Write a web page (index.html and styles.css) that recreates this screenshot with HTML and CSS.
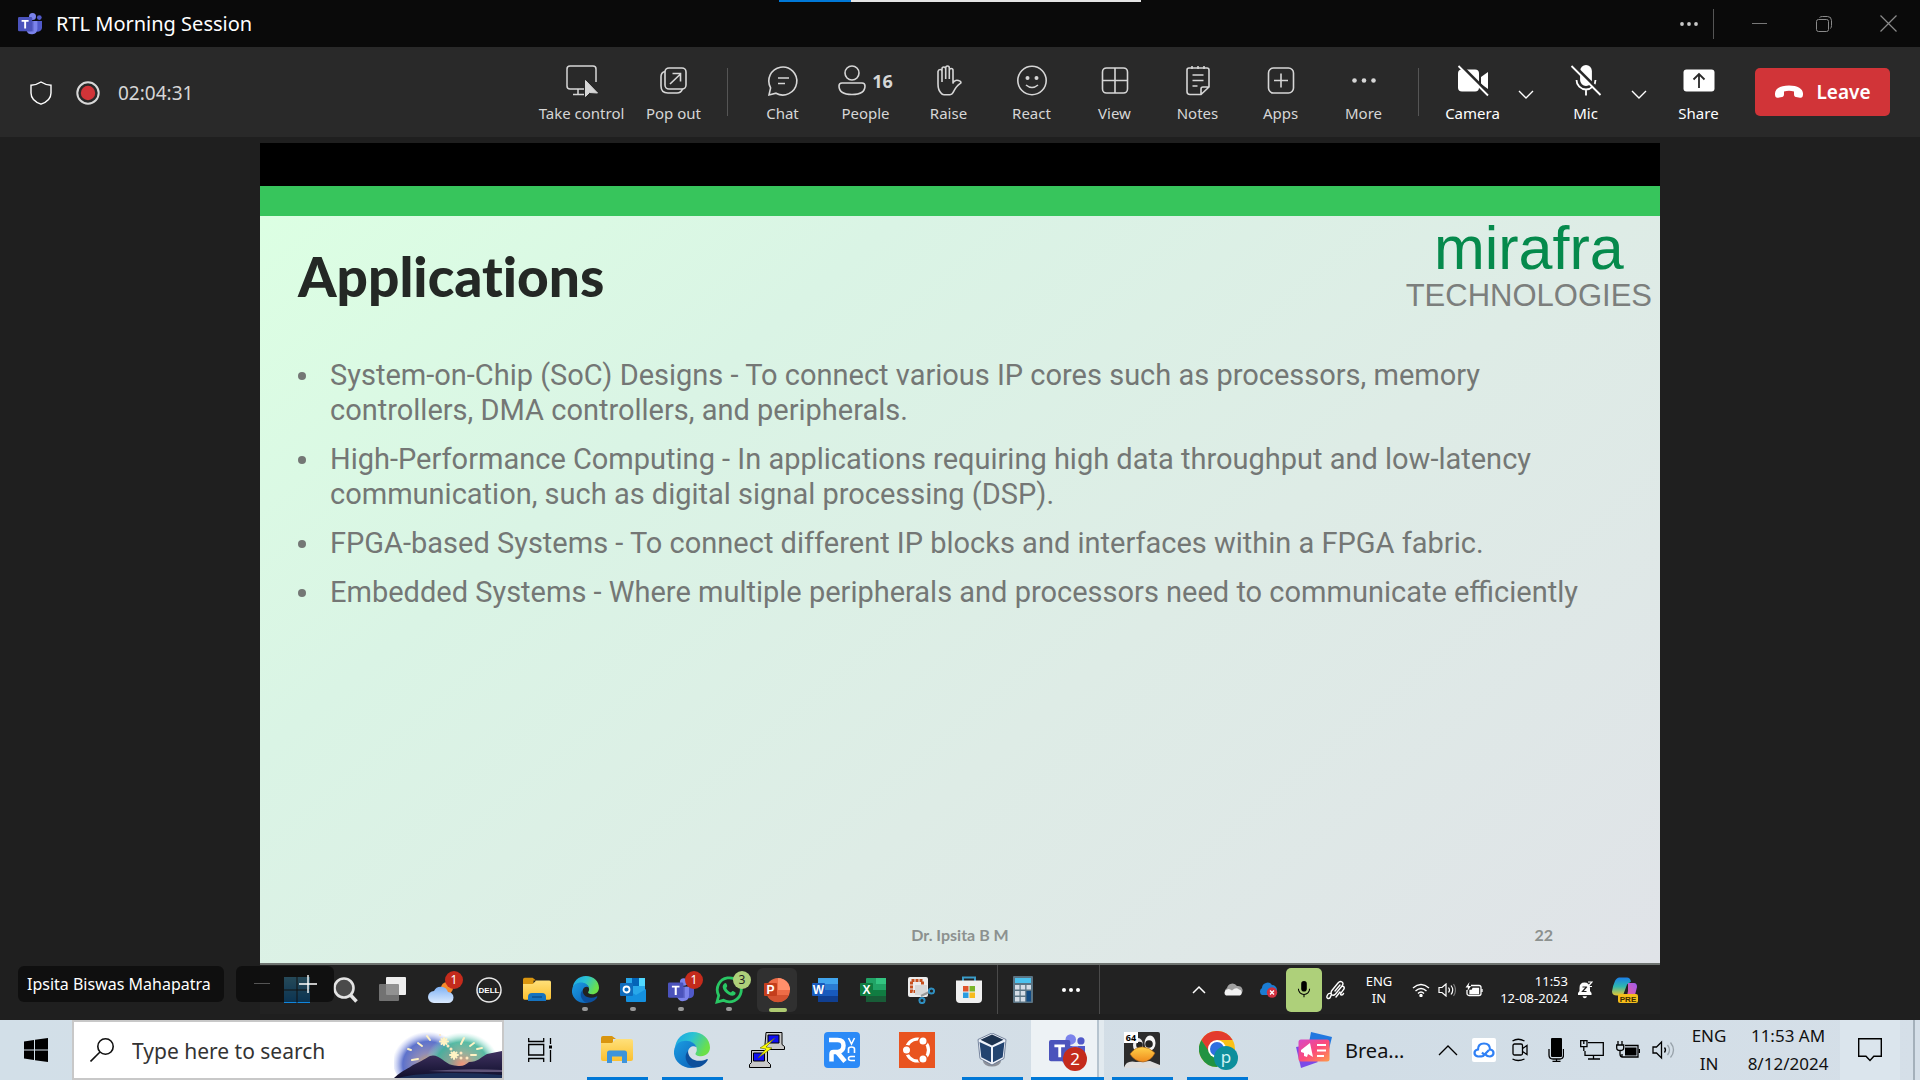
FILE: index.html
```html
<!DOCTYPE html>
<html lang="en">
<head>
<meta charset="utf-8">
<title>RTL Morning Session</title>
<meta name="viewport" content="width=device-width, initial-scale=1">
<link rel="stylesheet" href="styles.css">
</head>
<body>
<svg class="defs" aria-hidden="true">
  <defs>
    <linearGradient id="folder" x1="0" y1="0" x2="0" y2="1"><stop offset="0" stop-color="#ffe07a"/><stop offset="1" stop-color="#fbc02f"/></linearGradient>
    <linearGradient id="edgeTop" x1="0" y1="0" x2="1" y2="0.4"><stop offset="0" stop-color="#1ba3e8"/><stop offset="0.5" stop-color="#2bc3d2"/><stop offset="1" stop-color="#6be04a"/></linearGradient>
    <linearGradient id="edgeLow" x1="0" y1="0" x2="1" y2="1"><stop offset="0" stop-color="#1b9de2"/><stop offset="1" stop-color="#0b5cb5"/></linearGradient>
    <linearGradient id="news" x1="0" y1="0" x2="1" y2="1"><stop offset="0" stop-color="#d648c8"/><stop offset="0.5" stop-color="#fb4a7c"/><stop offset="1" stop-color="#ff9a4a"/></linearGradient>
    <linearGradient id="cloud" x1="0" y1="0" x2="0" y2="1"><stop offset="0" stop-color="#7fb2f5"/><stop offset="1" stop-color="#dbeafe"/></linearGradient>
    <linearGradient id="copA" x1="0" y1="0" x2="0" y2="1"><stop offset="0" stop-color="#1b7fe8"/><stop offset="0.5" stop-color="#2fb7b0"/><stop offset="1" stop-color="#e8c930"/></linearGradient>
    <linearGradient id="copB" x1="1" y1="0" x2="0" y2="1"><stop offset="0" stop-color="#9a5cf0"/><stop offset="1" stop-color="#ff5c8a"/></linearGradient>
    <linearGradient id="winTile" x1="0" y1="0" x2="0" y2="1"><stop offset="0" stop-color="#5fc4ef"/><stop offset="1" stop-color="#0f84dc"/></linearGradient>
    <linearGradient id="beak" x1="0" y1="0" x2="0" y2="1"><stop offset="0" stop-color="#ffd24a"/><stop offset="1" stop-color="#f08a1c"/></linearGradient>
    <radialGradient id="glowBlue" cy="0.6"><stop offset="0" stop-color="#d9a860"/><stop offset="0.35" stop-color="#8f8cb8"/><stop offset="0.7" stop-color="#5d72cc"/><stop offset="1" stop-color="#a0aef0" stop-opacity="0"/></radialGradient>
    <radialGradient id="glowGreen" cy="0.6"><stop offset="0" stop-color="#f08a6c"/><stop offset="0.35" stop-color="#8aa890"/><stop offset="0.7" stop-color="#45b49a"/><stop offset="1" stop-color="#9be6d6" stop-opacity="0"/></radialGradient>
    <linearGradient id="hill" x1="0" y1="0" x2="0" y2="1"><stop offset="0" stop-color="#3f3260"/><stop offset="1" stop-color="#100f2c"/></linearGradient>
    <symbol id="i-teams" viewBox="0 0 24 22">
      <circle cx="14.5" cy="3.6" r="3.5" fill="#7b83eb"/><circle cx="21.3" cy="4.6" r="2.4" fill="#5059c9"/>
      <path d="M16 8h8v6.5a4.3 4.3 0 0 1-8 2z" fill="#5059c9"/><path d="M8.500 8H19.400v8a5.600 5.600 0 0 1-10.900 1.500z" fill="#7b83eb"/>
      <path d="M8.500 8h7v10.400H9a8 8 0 0 1-.5-2z" fill="#4a50b0" opacity=".6"/>
      <rect y="4" width="14.200" height="14.200" rx="1.300" fill="#4b53bc"/><path d="M3.600 7h7v1.800H8.100v6.700H6.200V8.800H3.600z" fill="#fff"/>
    </symbol>
    <symbol id="i-edge" viewBox="0 0 36 36">
      <path d="M1 17C1 7 9 0 18.500 0 29 0 36 7.500 36 15.500c0 5-4 8.700-9 8.700-4 0-5.800-1.500-5.500-2.700.4-1.200 1.300-1.500 1.300-4C22.800 13 18 9.500 12 9.500 6 9.500 1.500 13 1 17z" fill="url(#edgeTop)"/>
      <path d="M0 19C1 11.500 6.500 8.800 12 8.800c5.500 0 9.500 3 10.500 6.400-3-2-8-.5-8.500 5C13.500 28 21 32.500 28 31c-3 3-7 5-11 5C7 36-1 28 0 19z" fill="url(#edgeLow)"/>
      <path d="M14 19c-4 4-3 11 3 15.500 4 1.500 8 1 11-.8 2.500-1.400 4.500-3.500 5.600-5.500.5-1-.3-1.400-1-1C27 30 20 29 17 26c-2-2-3-4.300-3-7z" fill="#0c4f9c"/>
    </symbol>
    <symbol id="i-folder" viewBox="0 0 32 28">
      <path d="M0 2a2 2 0 0 1 2-2h9l4 3h-3v5H0z" fill="#d9950f"/><path d="M0 7h11l4-4h15a2 2 0 0 1 2 2v18a2 2 0 0 1-2 2H2a2 2 0 0 1-2-2z" fill="url(#folder)"/>
    </symbol>
    <symbol id="i-mic" viewBox="0 0 20 26"><rect x="6" y="1" width="8" height="15" rx="4"/><path d="M2 12a8 8 0 0 0 16 0M10 20v4" fill="none" stroke="currentColor" stroke-width="1.500"/></symbol>
  </defs>
</svg>

<header class="titlebar">
  <div class="share-strip"><span class="share-strip-blue"></span></div>
  <svg class="brand" width="24" height="22"><use href="#i-teams"/></svg>
  <h1 class="title">RTL Morning Session</h1>
  <div class="win-controls">
    <button class="win-more" aria-label="More options"><svg width="20" height="6" fill="#c8c8c8"><circle cx="3" cy="3" r="1.900"/><circle cx="10" cy="3" r="1.900"/><circle cx="17" cy="3" r="1.900"/></svg></button>
    <span class="win-sep"></span>
    <button class="win-btn" aria-label="Minimize"><svg width="16" height="16" stroke="#777"><path d="M0 7.500h15"/></svg></button>
    <button class="win-btn" aria-label="Restore"><svg width="16" height="16" fill="none" stroke="#8a8a8a"><rect x=".5" y="3.500" width="12" height="12" rx="2"/><path d="M3.500 1.500q1-1 3-1h5q4 0 4 4v5q0 2-1 3"/></svg></button>
    <button class="win-btn" aria-label="Close"><svg width="17" height="17" stroke="#8a8a8a" stroke-width="1.200"><path d="M.5.500l16 16M16.500.500l-16 16"/></svg></button>
  </div>
</header>

<section class="callbar" aria-label="Call controls">
  <div class="status">
    <svg width="22" height="24" fill="none" stroke="#fff" stroke-width="1.400"><path d="M11 1c3 2 6 3 10 3.200V12c0 5.500-4 9-10 11.200C5 21 1 17.500 1 12V4.200C5 4 8 3 11 1z"/></svg>
    <svg width="24" height="24"><circle cx="12" cy="12" r="10.700" fill="none" stroke="#d8d8d8" stroke-width="2"/><circle cx="12" cy="12" r="7.200" fill="#d13438"/></svg>
    <time class="elapsed">02:04:31</time>
  </div>
  <div class="tools">
    <button class="tool tool-wide"><svg width="34" height="34" fill="none" stroke="currentColor" stroke-width="1.500"><path d="M19 25H5a3 3 0 0 1-3-3V5a3 3 0 0 1 3-3h23a3 3 0 0 1 3 3v13M13 25v5M8 30.500h11"/><path d="M20.500 16.500v16l4-4 8 .5z" fill="currentColor" stroke-width="1"/></svg><span>Take control</span></button>
    <button class="tool"><svg width="34" height="34" fill="none" stroke="currentColor" stroke-width="1.600"><rect x="8" y="4" width="21" height="21" rx="4"/><path d="M8 7.500q-4 1-4 5V22q0 7 7 7h9q4 0 5.500-4M13 20L23.500 10M15.500 9.500h8v8"/></svg><span>Pop out</span></button>
    <span class="tool-sep"></span>
    <button class="tool"><svg width="34" height="34" fill="none" stroke="currentColor" stroke-width="1.600"><path d="M3 31l1.600-7.200A14 14 0 1 1 10 29.200z"/><path d="M12 14h11M12 19.500h7"/></svg><span>Chat</span></button>
    <button class="tool"><span class="tool-count"><svg width="28" height="34" fill="none" stroke="currentColor" stroke-width="1.600"><circle cx="14" cy="9" r="7"/><path d="M4 19h20q3 0 3 3 0 8.500-13 8.500T1 22q0-3 3-3z"/></svg><b>16</b></span><span>People</span></button>
    <button class="tool"><svg width="34" height="34" fill="none" stroke="currentColor" stroke-width="1.600" stroke-linejoin="round"><path d="M10 18V7.500q0-2-1.800-2T6 7.500V20q0 6 3 9 1 1.700 3 1.700h6q2 0 3-2c2-4 4-7 7-9 1.500-1 1-2 0-2.600-3-1.500-6-1-7 2V6.500q0-2-1.800-2t-1.900 2V15M10 14V5q0-2 1.800-2T13.700 5v10M13.700 14V4q0-2 1.800-2t1.800 2v11"/></svg><span>Raise</span></button>
    <button class="tool"><svg width="34" height="34" fill="none" stroke="currentColor" stroke-width="1.600"><circle cx="17" cy="16.500" r="14.200"/><path d="M11 21q6 5 12 0"/><g fill="currentColor" stroke="none"><circle cx="12.500" cy="14" r="2"/><circle cx="21.500" cy="14" r="2"/></g></svg><span>React</span></button>
    <button class="tool"><svg width="34" height="34" fill="none" stroke="currentColor" stroke-width="1.600"><rect x="4.500" y="4" width="25" height="25" rx="4"/><path d="M17 4v25M4.500 16.500h25"/></svg><span>View</span></button>
    <button class="tool"><svg width="34" height="34" fill="none" stroke="currentColor" stroke-width="1.600"><path d="M20 30.500H9a3 3 0 0 1-3-3V6a2 2 0 0 1 2-2h18a2 2 0 0 1 2 2v17zM20 30.500V25q0-2 2-2h6M11 2v3M17 2v3M23 2v3M11.500 11h11M11.500 16.500h11M11.500 22h5"/></svg><span>Notes</span></button>
    <button class="tool"><svg width="34" height="34" fill="none" stroke="currentColor" stroke-width="1.600"><rect x="4.500" y="4" width="25" height="25" rx="5"/><path d="M17 9.500v14M10 16.500h14"/></svg><span>Apps</span></button>
    <button class="tool"><svg width="34" height="34" fill="currentColor"><circle cx="7.500" cy="16.500" r="2.300"/><circle cx="17" cy="16.500" r="2.300"/><circle cx="26.500" cy="16.500" r="2.300"/></svg><span>More</span></button>
    <span class="tool-sep tool-sep-right"></span>
    <div class="split">
      <button class="tool"><svg width="34" height="34"><rect x="2" y="5.500" width="21" height="22" rx="4" fill="#fff"/><path d="M25 13l7-5v17l-7-5z" fill="#fff"/><path d="M4 .500L34 30.500" stroke="#292929" stroke-width="3"/><path d="M2.500 2L32 31.500" stroke="#fff" stroke-width="1.800"/></svg><span>Camera</span></button>
      <button class="chev" aria-label="Camera options"><svg width="16" height="10" fill="none" stroke="#fff" stroke-width="1.400"><path d="M1 1l7 7 7-7"/></svg></button>
    </div>
    <div class="split">
      <button class="tool"><svg width="34" height="34" fill="none" stroke="#fff" stroke-width="1.800"><rect x="12" y="2" width="10" height="19" rx="5" fill="#fff"/><path d="M7.500 16a9.500 9.500 0 0 0 19 0M17 26v5.500"/><path d="M4 .500L34 30.500" stroke="#292929" stroke-width="3"/><path d="M2.500 2L31.500 31"/></svg><span>Mic</span></button>
      <button class="chev" aria-label="Microphone options"><svg width="16" height="10" fill="none" stroke="#fff" stroke-width="1.400"><path d="M1 1l7 7 7-7"/></svg></button>
    </div>
    <button class="tool tool-share"><svg width="34" height="34"><rect x="1.500" y="5.500" width="31" height="22" rx="3" fill="#fff"/><path d="M17 24V10M11.500 15.500L17 10l5.500 5.500" fill="none" stroke="#292929" stroke-width="1.800"/></svg><span>Share</span></button>
    <button class="leave"><svg width="30" height="14" fill="#fff"><path d="M15 .500c9 0 14.500 3.500 14 9-.2 2.500-1 3.600-3 3.200l-4-.8c-1.500-.4-2-1-2-3V6.500q-5-1.500-10 0V9c0 2-.5 2.600-2 3l-4 .8c-2 .3-2.800-.8-3-3.200C.5 4 6 .500 15 .500z"/></svg>Leave</button>
  </div>
</section>

<main class="stage">
  <div class="shared">
    <div class="shared-gap"></div>
    <article class="slide">
      <div class="slide-head">
        <h2>Applications</h2>
        <div class="logo"><span class="logo-name">mirafra</span><span class="logo-sub">TECHNOLOGIES</span></div>
      </div>
      <ul>
        <li>System-on-Chip (SoC) Designs - To connect various IP cores such as processors, memory controllers, DMA controllers, and peripherals.</li>
        <li>High-Performance Computing - In applications requiring high data throughput and low-latency communication, such as digital signal processing (DSP).</li>
        <li>FPGA-based Systems - To connect different IP blocks and interfaces within a FPGA fabric.</li>
        <li>Embedded Systems - Where multiple peripherals and processors need to communicate efficiently</li>
      </ul>
      <footer class="slide-foot"><span></span><span>Dr. Ipsita B M</span><span class="slide-num">22</span></footer>
    </article>
    <div class="remote-bar">
      <div class="remote-apps">
        <div class="r-app"><svg width="26" height="26" fill="url(#winTile)"><path d="M0 0h12.500v12.500H0zM13.500 0H26v12.500H13.500zM0 13.500h12.500V26H0zM13.500 13.500H26V26H13.500z"/></svg></div>
        <div class="r-app"><svg width="26" height="26" fill="#4a4a4a" stroke="#e4e4e4" stroke-width="2.600"><circle cx="12" cy="11" r="9.500"/><path d="M18.500 18l6 6.500" stroke-width="3.500"/></svg></div>
        <div class="r-app"><svg width="28" height="26"><rect x="7" width="20" height="18" rx="1" fill="#eee"/><rect y="7" width="20" height="17" rx="1" fill="#808080" opacity=".85"/></svg></div>
        <div class="r-app"><svg width="28" height="28"><circle cx="20" cy="12" r="6" fill="#f58a2c"/><path d="M7 27a6 6 0 0 1 0-12 7.500 7.500 0 0 1 14 1 5.500 5.500 0 0 1 0 11z" fill="url(#cloud)"/></svg><i class="badge">1</i></div>
        <div class="r-app"><svg width="26" height="26"><circle cx="13" cy="13" r="12" fill="none" stroke="#e8e8e8" stroke-width="1.500"/><text x="13" y="16" text-anchor="middle" class="dell">DELL</text></svg></div>
        <div class="r-app"><svg width="28" height="26"><use href="#i-folder"/><path d="M5 24v-4q0-4 4-4h10q4 0 4 4v4z" fill="#1573c0"/><path d="M9 20h10" stroke="#0c4f8e" stroke-width="1.500"/></svg></div>
        <div class="r-app r-run"><svg width="27" height="27"><use href="#i-edge"/></svg></div>
        <div class="r-app r-run"><svg width="26" height="26"><rect x="6" y="1" width="19" height="18" fill="#28a8ea"/><path d="M12 1h7v8h-7z" fill="#0364b8"/><path d="M19 1h6v8h-6z" fill="#50d9ff"/><path d="M6 12l10 6 10-6v12a1 1 0 0 1-1 1H7a1 1 0 0 1-1-1z" fill="#1490df"/><rect y="6" width="13" height="13" rx="1" fill="#0f6cbd"/><circle cx="6.500" cy="12.500" r="3" fill="none" stroke="#fff" stroke-width="1.800"/></svg></div>
        <div class="r-app r-run"><svg width="26" height="24"><use href="#i-teams"/></svg><i class="badge">1</i></div>
        <div class="r-app r-run"><svg width="28" height="28"><path d="M2 26l1.700-6.500A12 12 0 1 1 8.400 24.300z" fill="none" stroke="#29c764" stroke-width="2.800"/><path d="M9.500 7.500c1-1 2 0 2.500 1.500s0 2-.8 3c1 2 2.500 3.500 4.800 4.500 1-1 1.500-1.800 2.500-1.200 2 1 2.500 1.200 2 2.500-1 2.500-4 2.500-7 .8s-5.500-4.600-5.800-7.300c0-1.800.6-2.800 1.800-3.800z" fill="#29c764"/></svg><i class="badge badge-lime">3</i></div>
        <div class="r-app r-run r-active"><svg width="26" height="26"><circle cx="14" cy="13" r="12" fill="#ed6c47"/><path d="M14 1a12 12 0 0 1 12 12H14z" fill="#ff8f6b"/><path d="M3 18a12 12 0 0 0 22 0z" fill="#d35230"/><rect y="6" width="13" height="13" rx="1" fill="#c43e1c"/><text x="6.500" y="17" text-anchor="middle" class="glyph">P</text></svg></div>
        <div class="r-app"><svg width="26" height="26"><rect x="6" y="1" width="20" height="24" rx="1" fill="#2b7cd3"/><path d="M6 1h20v6H6z" fill="#41a5ee"/><path d="M6 13h20v6H6z" fill="#185abd"/><path d="M6 19h20v6H6z" fill="#103f91"/><rect y="6" width="13" height="13" rx="1" fill="#185abd"/><text x="6.500" y="17" text-anchor="middle" class="glyph">W</text></svg></div>
        <div class="r-app"><svg width="26" height="26"><rect x="6" y="1" width="20" height="24" rx="1" fill="#21a366"/><path d="M16 1h10v6H16z" fill="#33c481"/><path d="M6 13h20v12H6z" fill="#107c41"/><path d="M6 19h20v6H6z" fill="#185c37"/><rect y="6" width="13" height="13" rx="1" fill="#107c41"/><text x="6.500" y="17" text-anchor="middle" class="glyph">X</text></svg></div>
        <div class="r-app"><svg width="28" height="28"><rect x="1" y="1" width="20" height="20" rx="2" fill="#ececec"/><rect x="4.500" y="4.500" width="11" height="11" fill="none" stroke="#c8501e" stroke-width="3" stroke-dasharray="3 1"/><path d="M8 9h12v10H8z" fill="#d8d8d8"/><path d="M14 20l8-4" stroke="#999" stroke-width="2"/><circle cx="24.500" cy="15" r="2.600" fill="none" stroke="#2f8fc0" stroke-width="2"/><circle cx="15" cy="24.500" r="2.600" fill="none" stroke="#2f8fc0" stroke-width="2"/></svg></div>
        <div class="r-app"><svg width="26" height="27"><path d="M7 6V1.500h12V6" fill="none" stroke="#3a9cc8" stroke-width="2"/><path d="M0 4.500h26V23a4 4 0 0 1-4 4H4a4 4 0 0 1-4-4z" fill="#f0f0f0"/><path d="M7 10h5.500v5.500H7z" fill="#e0542c"/><path d="M13.500 10H19v5.500h-5.500z" fill="#7ab52a"/><path d="M7 16.500h5.500V22H7z" fill="#2c9ce0"/><path d="M13.500 16.500H19V22h-5.500z" fill="#f7bb1e"/></svg></div>
        <span class="r-sep"></span>
        <div class="r-app"><svg width="20" height="27"><rect width="20" height="27" rx="1" fill="#5b7484"/><path d="M2 2h16v5H2z" fill="#4cc2ee"/><path d="M2 9h4.500v4.500H2zM7.700 9h4.500v4.500H7.700zM13.500 9H18v4.500h-4.500zM2 15h4.500v4.500H2zM7.700 15h4.500v4.500H7.700zM2 21h4.500v4.500H2zM7.700 21h4.500v4.500H7.700z" fill="#d5dde6"/><path d="M13.500 15H18v10.500h-4.500z" fill="#114a82"/></svg></div>
        <div class="r-app"><svg width="20" height="6" fill="#fff"><circle cx="3" cy="3" r="2"/><circle cx="10" cy="3" r="2"/><circle cx="17" cy="3" r="2"/></svg></div>
        <span class="r-sep"></span>
      </div>
      <div class="remote-tray">
        <div class="rt w34"><svg width="14" height="9" fill="none" stroke="#fff" stroke-width="1.500"><path d="M1 8l6-6 6 6"/></svg></div>
        <div class="rt w34"><svg width="20" height="13"><path d="M4 12a4 4 0 0 1 0-7 5.500 5.500 0 0 1 10-2 4 4 0 0 1 2 9z" fill="#a0a0a0"/><path d="M3 12.500a3.300 3.300 0 0 1 1-6q2-1.500 5 1 4-4 7-1a3.200 3.200 0 0 1 1 6z" fill="#f2f2f2"/></svg></div>
        <div class="rt w36"><svg width="20" height="16"><path d="M4 13a4 4 0 0 1 0-7 5.500 5.500 0 0 1 10-3 4.500 4.500 0 0 1 0 10z" fill="#1b7cd2"/><circle cx="14" cy="10.500" r="5.200" fill="#d23240"/><path d="M12 8.500l4 4M16 8.500l-4 4" stroke="#fff" stroke-width="1.300"/></svg></div>
        <div class="rt rt-mic"><svg width="14" height="19"><use href="#i-mic"/></svg></div>
        <div class="rt w28"><svg width="20" height="20" fill="none" stroke="#fff" stroke-width="1.400" stroke-linecap="round"><path d="M5.500 11L12 3q2-2.500 4-1t0 4L9.500 14q-2 2-3.500 1t-.5-4zM9 11l5-6M16 6q3 .5 2 3l-3 4q-1 2 .5 2t2-1.500M5 15.500q-1 3.500-3 3T1.500 15q1-2 3-1.500M10 17l4-5"/></svg></div>
        <div class="rt rt-lang">ENG<br>IN</div>
        <div class="rt w26"><svg width="18" height="14" fill="none" stroke="#fff" stroke-width="1.400"><path d="M1 5q8-7 16 0M3.500 8q5.500-5 11 0M6 10.500q3-3 6 0"/><circle cx="9" cy="12.500" r="1" fill="#fff"/></svg></div>
        <div class="rt w26"><svg width="18" height="14" fill="none" stroke="#fff" stroke-width="1.200"><path d="M1 4.500h3l4-3.500v12l-4-3.500H1z"/><path d="M10.500 4.500q2 2.500 0 5M13 2.500q3.500 4.500 0 9"/><path d="M15.500 1q4 6 0 12" stroke="#777"/></svg></div>
        <div class="rt w28"><svg width="18" height="15" fill="none" stroke="#fff" stroke-width="1.300"><path d="M6 3.500h8a2 2 0 0 1 2 2v6a2 2 0 0 1-2 2H4a2 2 0 0 1-2-2V8"/><path d="M7 11.500h6.500v-5H8l-1 2H5v3zM17 7v3" fill="#fff"/><path d="M4.500 0L.500 5.500H3l-.5 3.500L6 4H3.500z" fill="#fff" stroke="none"/></svg></div>
        <div class="rt rt-time">11:53<br>12-08-2024</div>
        <div class="rt w34"><svg width="16" height="18"><path d="M1 14V12l1.500-2V7q0-5.500 5-5.500T13 7v3l1.500 2v2zM5.500 15.200h4.500q-.5 2-2.200 2t-2.300-2z" fill="#fff"/><path d="M5.500 6h4l-4 4.500h4" fill="none" stroke="#222" stroke-width="1.200"/><path d="M11 1h4l-4 4.500h4" fill="none" stroke="#fff" stroke-width="1.200"/></svg></div>
        <div class="rt rt-copilot"><svg width="26" height="26"><path d="M8 .500h7q3 0 4 4l-4 3-4 11H5q-5 0-5-4Q1 8 3 4T8 .500z" fill="url(#copA)"/><path d="M16 6h6q3 0 3 4l-2 8q-1 4-5 4h-6q3-1 4-8z" fill="url(#copB)"/><rect x="6" y="17" width="20" height="9" rx="2" fill="#f5bd1a"/><text x="16" y="25" text-anchor="middle" class="pre">PRE</text></svg></div>
      </div>
    </div>
  </div>
  <div class="name-tag">Ipsita Biswas Mahapatra</div>
  <div class="zoom-box">
    <button aria-label="Zoom out"><svg width="18" height="18" stroke="#555"><path d="M1 8.500h16"/></svg></button>
    <button aria-label="Zoom in"><svg width="18" height="18" stroke="#fff" stroke-width="1.400"><path d="M0 9h18M9 0v18"/></svg></button>
  </div>
</main>

<footer class="taskbar">
  <button class="start" aria-label="Start"><svg width="24" height="24"><path d="M0 3.400l10-1.400v9.500H0zM11 1.800L24 0v11.500H11zM0 12.500h10V22L0 20.600zM11 12.500h13V24l-13-1.800z"/></svg></button>
  <label class="search">
    <svg width="24" height="24" fill="none" stroke="#111" stroke-width="1.600"><circle cx="15.500" cy="8.500" r="7.700"/><path d="M10 14L.500 23.500"/></svg>
    <input type="text" placeholder="Type here to search" aria-label="Type here to search">
    <svg class="highlight" width="108" height="54" viewBox="0 0 108 54">
      <ellipse cx="34" cy="34" rx="36" ry="33" fill="url(#glowBlue)"/><ellipse cx="68" cy="34" rx="37" ry="32" fill="url(#glowGreen)" opacity=".9"/>
      <path d="M0 54c10-9 14-9 19-13 9-4 13-7 17-9 8-3 14 7 22 9 10 2 12 1 17-3 9 0 12-5 18-8l15-3v27z" fill="url(#hill)"/>
      <path d="M4 54c20-6 70-6 104-3v3z" fill="#1c2f58"/><path d="M34 47q40-3 74-1v2q-40 0-74-1z" fill="#5f5478"/>
      <g stroke="#fff3c4" stroke-width="2" stroke-linecap="round"><path d="M33 12l3 4M24 19l4 3M14 25l3 1M18 36l6-1M70 14l-3 6M80 19l-4 3M88 24l-5 1M82 31h-5M50 14v7M46 17.500h8M47.500 15l5 5M52.500 15l-5 5M60 28v7M56 31h8M57.500 28.500l5 5M62.500 28.500l-5 5"/></g>
      <g fill="#ffe9c0"><circle cx="54" cy="22" r="1.500"/><circle cx="57" cy="25" r="1.500"/><circle cx="67" cy="29" r="1.500"/><circle cx="67" cy="34" r="1.500"/><circle cx="73" cy="34" r="1.500"/><circle cx="46" cy="11" r="1"/></g>
    </svg>
  </label>
  <button class="taskview" aria-label="Task View"><svg width="24" height="24" fill="none" stroke="#000" stroke-width="1.300"><path d="M.700 0v3.500h15V0M.700 6.500h15v10.500H.700zM.700 24v-3.500h15V24M22.500 0v6M22.500 12v12"/><path d="M21 7.500h3v3h-3z" fill="#000" stroke="none"/></svg></button>
  <nav class="apps" aria-label="Open apps">
    <button class="app open" aria-label="File Explorer"><svg width="32" height="28"><use href="#i-folder"/><path d="M6 27V17q0-2.500 2.500-2.500h15Q26 14.500 26 17v10h-5v-6.500H11V27z" fill="#3d94dc"/></svg></button>
    <button class="app open" aria-label="Edge"><svg width="36" height="36"><use href="#i-edge"/></svg></button>
    <button class="app" aria-label="PuTTY"><svg width="36" height="36"><g stroke="#000"><path d="M17 .500h16v12l2.500 2v3H18l-2-5z" fill="#c9c9c9"/><path d="M19 3h11v8H19z" fill="#1010f0"/><path d="M2.500 18.500h16v11l3 3v3H.500v-3l2-2z" fill="#c9c9c9"/><path d="M4.500 21h11v8h-11z" fill="#1010f0"/></g><path d="M26 6L11 16l6 1-8 9 14-10-6-1z" fill="#ff0" stroke="#660" stroke-width=".6"/></svg></button>
    <button class="app" aria-label="RealVNC"><svg width="36" height="36" fill="none" stroke="#fff"><rect width="36" height="36" rx="4" fill="#2b8af7" stroke="none"/><path d="M5 8h8.500q6 0 6 5.500T14 20H9.500q-2 0-2 2v7.500M13 20l8 9.500" stroke-width="4.500"/><path d="M24.500 6l3 6 3-6M24.500 21v-4q0-2 3-2t3 2v4M31 24.500h-4q-2.500 0-2.500 2t2.500 2h4" stroke-width="1.600"/></svg></button>
    <button class="app" aria-label="Ubuntu"><svg width="36" height="36"><rect width="36" height="36" fill="#e95420"/><circle cx="18.500" cy="18" r="11" fill="none" stroke="#fff" stroke-width="3.200"/><g fill="#fff" stroke="#e95420" stroke-width="1.600"><circle cx="7.500" cy="18" r="4.300"/><circle cx="24" cy="9" r="4.300"/><circle cx="24" cy="27" r="4.300"/></g></svg></button>
    <button class="app open" aria-label="VirtualBox"><svg width="30" height="34"><ellipse cx="15" cy="28" rx="9" ry="5.500" fill="#8c9099"/><path d="M15 0l14 6.500-2 19L15 32 3 25.500 1 6.500z" fill="#eef2fa" stroke="#5a6b88" stroke-width=".8"/><path d="M15 1.500l11.500 5.200L15 12.500 3.500 6.700z" fill="#1d3350"/><path d="M2.500 9l11.500 5.300v15L4.300 24.200zM27.500 9L16 14.300v15l9.700-5.100z" fill="#234470"/></svg></button>
    <button class="app open app-active" aria-label="Teams"><svg width="36" height="33"><use href="#i-teams"/></svg><i class="count">2</i></button>
    <button class="app open" aria-label="MobaXterm"><svg width="36" height="36"><rect width="36" height="36" rx="2" fill="#2c2c2c"/><path d="M0 36q2-8 12-6l14-1 10 4v3z" fill="#ddd"/><ellipse cx="14" cy="13" rx="5" ry="7" fill="#eee"/><ellipse cx="26" cy="11" rx="5.500" ry="7.500" fill="#f5f5f5"/><circle cx="15.500" cy="13" r="3.300" fill="#222"/><circle cx="25" cy="12" r="3.800" fill="#222"/><path d="M6 22q6-8 13-7 6 0 12 6-4 8-12 9-9-1-13-8z" fill="url(#beak)" stroke="#a55c10" stroke-width=".6"/><rect width="14" height="11" fill="#fff"/><text x="7" y="9" text-anchor="middle" class="n64">64</text></svg></button>
    <button class="app open" aria-label="Chrome"><svg class="chrome" width="40" height="40"><circle cx="18" cy="18" r="18" fill="#fbc116"/><path d="M2.400 9A18 18 0 0 1 33.600 9H18L10 22z" fill="#e33b2e"/><path d="M2.400 9A18 18 0 0 0 18 36l8-13-15-1z" fill="#229342"/><circle cx="18" cy="18" r="9" fill="#fff"/><circle cx="18" cy="18" r="7" fill="#2f6fe0"/><circle cx="27" cy="27" r="12" fill="#0d8f9c"/><text x="27" y="32" text-anchor="middle" class="p-badge">p</text></svg></button>
  </nav>
  <div class="tray">
    <a class="news" href="#"><svg width="36" height="36"><path d="M15 0l21 5-4 16-20-5z" fill="#2178e0"/><path d="M0 15l6-1 16 16-17 6z" fill="#7b4ae8"/><rect x="2.500" y="7.500" width="31" height="22" rx="2.500" fill="url(#news)"/><path d="M5 18l9-7 3 14-5-3-1 3-3-1v-3l-3-1z" fill="#fff"/><path d="M21 13h9M21 18.500h9M21 24h7" stroke="#fff" stroke-width="1.800"/></svg><span>Brea...</span></a>
    <div class="ti w36"><svg width="20" height="12" fill="none" stroke="#000" stroke-width="1.300"><path d="M1 11l9-9 9 9"/></svg></div>
    <div class="ti w36"><svg width="24" height="24"><rect width="24" height="24" rx="2" fill="#fff"/><path d="M13 17.500l-3-3M17 12l-6 6q-1 .5-5 .5-3.500-.5-3.500-3.500T6 11.500q0-6 6-6t6 6q3.500.5 3.500 3.500T18 18.500q-3 0-4.500-2" fill="none" stroke="#2f80f5" stroke-width="2.200"/></svg></div>
    <div class="ti w36"><svg width="20" height="24" fill="none" stroke="#000" stroke-width="1.300"><rect x="3" y="6" width="9.500" height="11" rx="1.500"/><path d="M12.500 10.500l4.500-3v9l-4.500-3M2.500 3q5.500-3.500 12 0M2.500 21q5.500 3 12 0"/></svg></div>
    <div class="ti w36"><svg width="16" height="24"><rect x="3" width="11" height="19" rx="1"/><path d="M1 11v6q0 4 4 4h7q3.500 0 3.500-4v-6M8.500 21v3M4.500 23.400h8" fill="none" stroke="#000" stroke-width="1.300"/></svg></div>
    <div class="ti w36"><svg width="24" height="20" fill="none" stroke="#000" stroke-width="1.300"><path d="M8 2.700h15.300v12.600H5V11M13.500 15.500V19M8 19h12M.700.700H7v6H.700zM3.800.700V4M3.800 7v4"/></svg></div>
    <div class="ti w36"><svg width="24" height="18" fill="none" stroke="#000" stroke-width="1.300"><path d="M9 4.500h13v11.500H6v-3M23.500 8v4M2 0v4M6 0v4M.700 4h7v3q0 2.500-3.500 2.500T.700 7zM4 9.500V13q0 3 2.500 3"/><path d="M9 6.500h11.500v8H9z" fill="#000" stroke="none"/></svg></div>
    <div class="ti w36"><svg width="24" height="20" fill="none" stroke="#000" stroke-width="1.300"><path d="M1 7h3.500L9.500 2v16l-5-5H1z"/><path d="M12.500 7.500q2 2.500 0 5"/><path d="M15.500 5q4 5 0 10M18.500 2.500q6 7.500 0 15" stroke="#98a2aa"/></svg></div>
    <div class="lang">ENG<br>IN</div>
    <div class="clock">11:53 AM<br>8/12/2024</div>
    <button class="notif" aria-label="Notifications"><svg width="24" height="24" fill="none" stroke="#000" stroke-width="1.400"><path d="M.700.700h22.600v17.500h-7.500L12 22.500l-4-4.300H.700z"/></svg></button>
    <button class="peek" aria-label="Show desktop"></button>
  </div>
</footer>
</body>
</html>
```
FILE: styles.css
```css
* { box-sizing: border-box; }
body {
  margin: 0;
  min-height: 100vh;
  display: flex;
  flex-direction: column;
  background: #1f1f1f;
  color: #fff;
  font-family: "Noto Sans", "Open Sans", sans-serif;
}
button {
  margin: 0;
  padding: 0;
  border: 0;
  background: none;
  color: inherit;
  font: inherit;
  display: flex;
  align-items: center;
  justify-content: center;
}
svg { display: block; flex: none; }
.defs { position: absolute; width: 0; height: 0; }

/* title bar */
.titlebar {
  position: relative;
  display: flex;
  align-items: center;
  height: 47px;
  padding-left: 18px;
  background: #0a0a0a;
}
.share-strip {
  position: absolute;
  top: 0;
  left: calc(50% - 181px);
  width: 362px;
  height: 2px;
  background: #e4e4e4;
}
.share-strip-blue { display: block; width: 72px; height: 2px; background: #0078d7; }
.title { margin: 0 0 0 14px; font-size: 20px; line-height: 28px; font-weight: 400; }
.win-controls { display: flex; align-items: center; margin-left: auto; }
.win-more { width: 48px; height: 47px; }
.win-sep { width: 1px; height: 30px; margin-right: 14px; background: #555; }
.win-btn { width: 64px; height: 46px; }

/* call controls */
.callbar {
  display: flex;
  justify-content: space-between;
  height: 90px;
  padding: 0 30px;
  background: #292929;
}
.status { display: flex; align-items: center; gap: 24px; padding-top: 2px; }
.elapsed { margin-left: -6px; font-size: 19px; line-height: 28px; color: #d6d6d6; }
.tools { display: flex; align-items: center; color: #d6d6d6; }
.tool {
  width: 83px;
  height: 90px;
  flex-direction: column;
  justify-content: flex-start;
  gap: 5px;
  padding-top: 17px;
  font-size: 15px;
  line-height: 20px;
}
.tool-wide { width: 101px; }
.tool-count { display: flex; align-items: center; gap: 6px; font-size: 18px; }
.tool-sep { width: 1px; height: 48px; margin-right: 13px; margin-left: 12px; background: #555; }
.tool-sep-right { margin-left: 13px; margin-right: 18px; }
.split { display: flex; margin-right: 6px; color: #fff; }
.split:nth-of-type(2) { margin-right: 0; }
.split .tool { width: 71px; }
.chev { width: 36px; height: 90px; padding-top: 5px; }
.tool-share { color: #fff; }
.leave {
  width: 135px;
  height: 48px;
  margin-left: 15px;
  gap: 12px;
  border-radius: 5px;
  background: #d13438;
  color: #fff;
  font-size: 19px;
  font-weight: 600;
}

/* shared screen */
.stage {
  position: relative;
  flex: 1;
  display: flex;
  padding: 6px 260px;
}
.shared { flex: 1; display: flex; flex-direction: column; background: #222; }
.shared-gap { height: 43px; background: #000; }
.slide {
  flex: 1;
  display: flex;
  flex-direction: column;
  border-top: 30px solid #37c55c;
  border-bottom: 2px solid #6f7471;
  background: linear-gradient(140deg, #dcffe3 0%, #daf4e5 28%, #deece6 60%, #e0e3e8 100%);
  font-family: Roboto, sans-serif;
}
.slide-head { display: flex; justify-content: space-between; padding: 0 8px 0 38px; }
.slide h2 {
  margin: 27px 0 0;
  color: #242825;
  font-family: Lato, sans-serif;
  font-size: 55px;
  line-height: 66px;
  font-weight: 900;
  font-variant-ligatures: none;
}
.logo { display: flex; flex-direction: column; align-items: center; font-family: "Liberation Sans", sans-serif; }
.logo-name { color: #058a4c; font-size: 61px; line-height: 64px; }
.logo-sub { color: #7c7f7d; font-size: 31px; line-height: 32px; }
.slide ul {
  display: flex;
  flex-direction: column;
  gap: 14px;
  margin: 46px 0 0;
  padding: 0 60px 0 70px;
  color: #747775;
  font-size: 29px;
  line-height: 35px;
  list-style: none;
}
.slide li::before {
  content: "";
  float: left;
  width: 8px;
  height: 8px;
  margin: 14px 0 0 -32px;
  border-radius: 4px;
  background: #747775;
}
.slide-foot {
  display: grid;
  grid-template-columns: 1fr 1fr 1fr;
  margin-top: auto;
  padding: 0 107px 18px;
  color: #8c918f;
  font-family: Lato, sans-serif;
  font-size: 16px;
  line-height: 20px;
  font-weight: 700;
  text-align: center;
}
.slide-num { text-align: right; }

.remote-bar { display: flex; justify-content: space-between; height: 49px; padding: 0 12px 0 13px; font-family: "Noto Sans", sans-serif; }
.remote-apps, .remote-tray { display: flex; align-items: center; }
.r-app { position: relative; width: 48px; height: 49px; display: grid; place-items: center; }
.r-run::after {
  content: "";
  position: absolute;
  bottom: 3px;
  left: 21px;
  width: 6px;
  height: 4px;
  border-radius: 2px;
  background: #999;
}
.r-active { height: 44px; border-radius: 6px; background: #303030; width: 40px; margin: 0 4px; }
.r-active::after { bottom: 0; left: 12px; width: 18px; background: #aecb72; }
.badge {
  position: absolute;
  top: 6px;
  right: 2px;
  width: 18px;
  height: 18px;
  border-radius: 9px;
  background: #c42b1c;
  font-size: 12px;
  line-height: 18px;
  font-style: normal;
  text-align: center;
}
.badge-lime { background: #aed07a; color: #222; }
.r-sep { width: 1px; height: 49px; background: #4a4a4a; margin: 0 1px 0 4px; }
.dell { fill: #fff; font: 700 8px "Liberation Sans", sans-serif; }
.glyph { fill: #fff; font: 700 12px "Liberation Sans", sans-serif; }
.pre { fill: #3a2c00; font: 700 8px "Liberation Sans", sans-serif; }
.n64 { fill: #000; font: 700 9px "Noto Sans", sans-serif; }
.p-badge { fill: #cff3f5; font: 400 17px "Noto Sans", sans-serif; }
.rt { display: grid; place-items: center; font-size: 13px; line-height: 17px; }
.w26 { width: 26px; }
.w28 { width: 28px; }
.w34 { width: 34px; }
.w36 { width: 36px; }
.rt-mic { width: 36px; height: 44px; border-radius: 5px; background: #aed07a; color: #000; }
.rt-lang { width: 58px; text-align: center; }
.rt-time { width: 80px; justify-items: end; text-align: right; }
.rt-copilot { width: 46px; }

/* overlays on the stage */
.name-tag, .zoom-box {
  position: absolute;
  bottom: 18px;
  height: 36px;
  border-radius: 6px;
  background: rgba(8, 8, 8, 0.65);
}
.name-tag { left: 18px; padding: 0 13px 0 9px; font-size: 16px; line-height: 36px; }
.zoom-box { left: 236px; width: 98px; display: flex; justify-content: space-between; padding: 0 17px; }

/* desktop taskbar */
.taskbar {
  display: flex;
  height: 60px;
  background: linear-gradient(90deg, #d2dfe8, #d5dfe7 40%, #d1dde6 70%, #d5dfe8);
  color: #111;
}
.start { width: 72px; height: 60px; }
.search {
  position: relative;
  width: 432px;
  display: flex;
  align-items: center;
  border: 2px solid #c8c8c8;
  background: #fff;
  padding-left: 16px;
}
.search input {
  width: 250px;
  height: 34px;
  margin-left: 18px;
  padding: 2px 0 0;
  border: 0;
  outline: 0;
  background: none;
  font: 21px/30px "Noto Sans", sans-serif;
}
.search input::placeholder { color: #333; opacity: 1; }
.highlight { position: absolute; right: 0; bottom: 0; }
.taskview { width: 75px; padding-right: 3px; }
.apps { display: flex; }
.app { position: relative; width: 75px; height: 60px; }
.open::after {
  content: "";
  position: absolute;
  bottom: 0;
  left: 8px;
  width: 61px;
  height: 3px;
  background: #0078d7;
}
.app-active { background: linear-gradient(90deg, transparent 2px, #edf2f5 2px 68px, #b6c4cf 68px 70px, #e2eaef 70px 75px); }
.app-active::after { left: 2px; width: 73px; }
.chrome { margin-top: 2px; margin-left: 4px; }
.count {
  position: absolute;
  top: 27px;
  left: 34px;
  width: 24px;
  height: 24px;
  border-radius: 12px;
  background: #c42b1c;
  color: #fff;
  font-size: 17px;
  line-height: 24px;
  font-style: normal;
}
.tray { display: flex; align-items: center; margin-left: auto; }
.news { display: flex; align-items: center; gap: 13px; width: 134px; color: #111; font-size: 20px; text-decoration: none; }
.ti { display: grid; place-items: center; height: 60px; }
.lang, .clock { font-size: 17px; line-height: 28px; text-align: center; }
.lang { width: 54px; }
.clock { width: 104px; }
.notif { width: 60px; height: 60px; background: #dbe5ed; }
.peek { width: 20px; height: 60px; justify-content: flex-start; background: linear-gradient(90deg, transparent 13px, #a4b0ba 13px 15px, transparent 15px); }
```
